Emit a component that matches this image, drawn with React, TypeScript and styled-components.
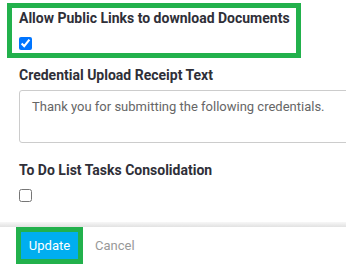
import React from "react";
import styled, { createGlobalStyle } from "styled-components";

const GlobalStyle = createGlobalStyle`
	html, body {
		margin: 0;
		padding: 0;
		background: #fff;
		overflow: hidden;
	}

	body {
		font-family: Roboto, "Liberation Sans", sans-serif;
		color: #333;
	}
`;

const HIGHLIGHT = "#22b14c";

const App = () => {
	return (
		<Page>
			<GlobalStyle />
			<Form>
				<Field $highlight>
					<Label>Allow Public Links to download Documents</Label>
					<Checkbox type="checkbox" defaultChecked />
				</Field>

				<Field>
					<Label>Credential Upload Receipt Text</Label>
					<TextArea defaultValue="Thank you for submitting the following credentials." />
				</Field>

				<Field>
					<Label>To Do List Tasks Consolidation</Label>
					<Checkbox type="checkbox" />
				</Field>
			</Form>

			<Divider />

			<Footer>
				<Highlight>
					<PrimaryButton type="button">Update</PrimaryButton>
				</Highlight>
				<LinkButton type="button">Cancel</LinkButton>
			</Footer>
		</Page>
	);
};

const Page = styled.div`
	width: 346px;
	height: 266px;
	display: flex;
	flex-direction: column;
`;

const Form = styled.div`
	display: flex;
	flex-direction: column;
	gap: 2px;
	padding: 3px 0 0 7px;
`;

const Field = styled.div<{ $highlight?: boolean }>`
	display: flex;
	flex-direction: column;
	align-items: flex-start;
	width: ${({ $highlight }) => ($highlight ? "fit-content" : "auto")};
	padding: 0 6px 3px 7px;
	border: 5px solid ${({ $highlight }) => ($highlight ? HIGHLIGHT : "transparent")};
`;

const Label = styled.label`
	font-size: 14px;
	line-height: 20px;
	font-weight: 700;
	color: #2f2f38;
	white-space: nowrap;
`;

const Checkbox = styled.input`
	width: 13px;
	height: 13px;
	margin: 9px 0 0 0;
`;

const TextArea = styled.textarea`
	box-sizing: border-box;
	width: 340px;
	height: 53px;
	margin: 5px 0 2px 0;
	padding: 7px 12px;
	border: 1px solid #ccc;
	border-radius: 3px;
	font-family: Roboto, "Liberation Sans", sans-serif;
	font-size: 13px;
	line-height: 18px;
	color: #666;
	resize: none;
	outline: none;
`;

const Divider = styled.div`
	height: 5px;
	margin-top: 12px;
	background: linear-gradient(#f7f7f7, #e2e2e2);
`;

const Footer = styled.div`
	display: flex;
	align-items: center;
	gap: 12px;
	padding-left: 16px;
`;

const Highlight = styled.div`
	display: flex;
	border: 5px solid ${HIGHLIGHT};
`;

const PrimaryButton = styled.button`
	width: 57px;
	height: 27px;
	padding: 0;
	border: none;
	background: #00aeef;
	color: #fff;
	font-family: Roboto, "Liberation Sans", sans-serif;
	font-size: 13px;
	cursor: pointer;
`;

const LinkButton = styled.button`
	padding: 0;
	border: none;
	background: none;
	color: #999;
	font-family: Roboto, "Liberation Sans", sans-serif;
	font-size: 13px;
	cursor: pointer;
`;

export default App;
